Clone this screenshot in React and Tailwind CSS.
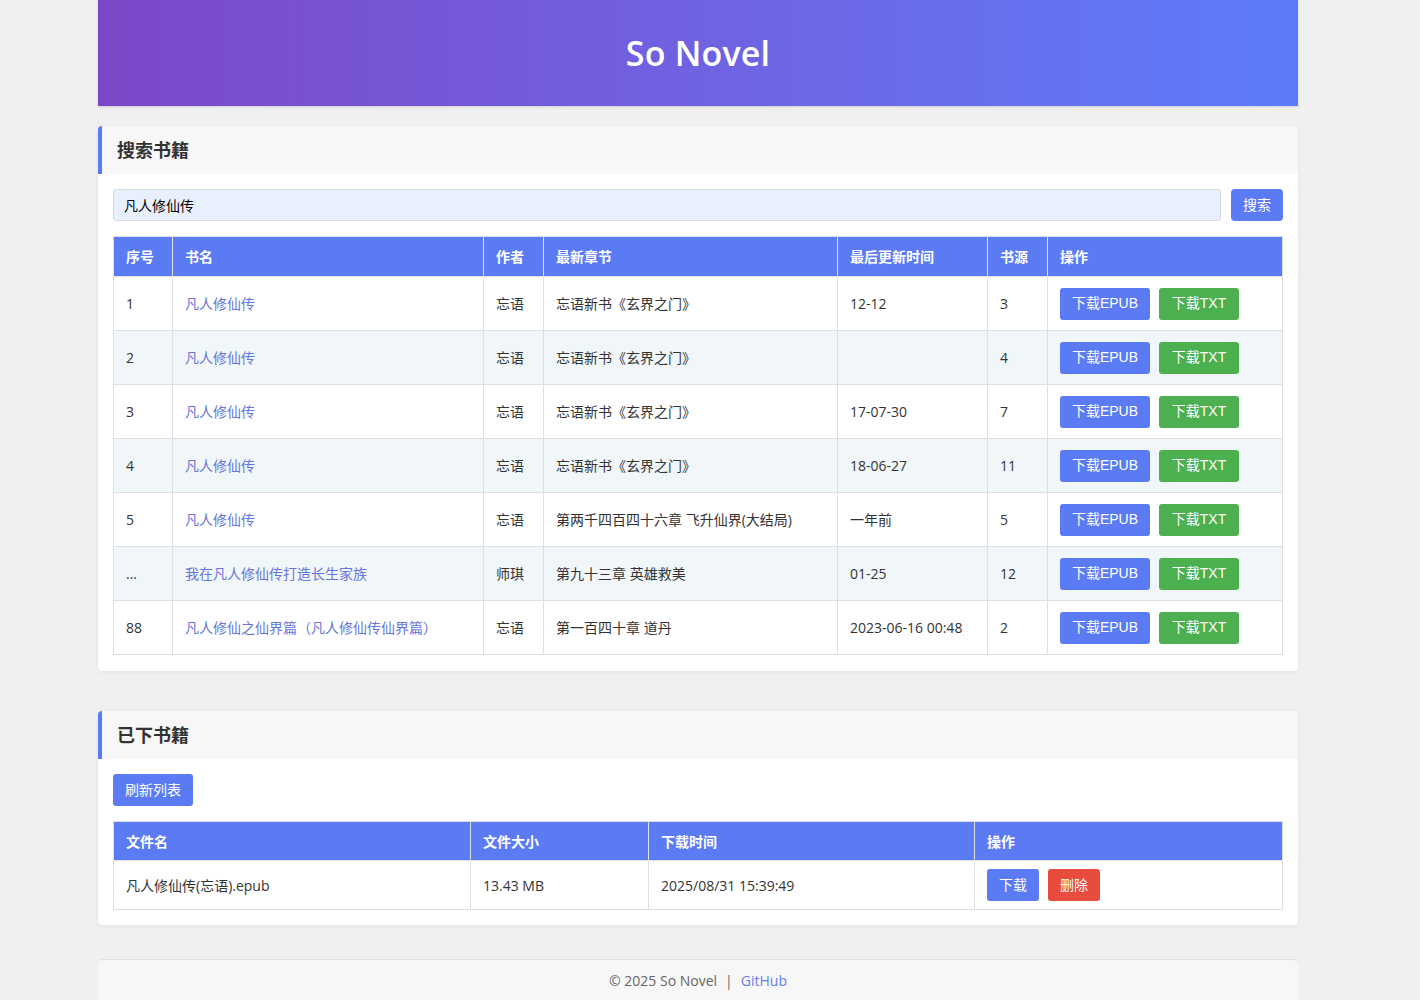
const books = [
  { no: "1", name: "凡人修仙传", author: "忘语", chapter: "忘语新书《玄界之门》", time: "12-12", src: "3" },
  { no: "2", name: "凡人修仙传", author: "忘语", chapter: "忘语新书《玄界之门》", time: "", src: "4" },
  { no: "3", name: "凡人修仙传", author: "忘语", chapter: "忘语新书《玄界之门》", time: "17-07-30", src: "7" },
  { no: "4", name: "凡人修仙传", author: "忘语", chapter: "忘语新书《玄界之门》", time: "18-06-27", src: "11" },
  { no: "5", name: "凡人修仙传", author: "忘语", chapter: "第两千四百四十六章 飞升仙界(大结局)", time: "一年前", src: "5" },
  { no: "...", name: "我在凡人修仙传打造长生家族", author: "师琪", chapter: "第九十三章 英雄救美", time: "01-25", src: "12" },
  { no: "88", name: "凡人修仙之仙界篇（凡人修仙传仙界篇）", author: "忘语", chapter: "第一百四十章 道丹", time: "2023-06-16 00:48", src: "2" },
];

const btnFont = { fontFamily: '"Liberation Sans", "Noto Sans CJK SC", sans-serif' };

const CardHeader = ({ title }) => (
  <div className="h-[48px] bg-[#f7f7f7] border-l-4 border-[#5b7bf5] flex items-center pl-[15px]">
    <h2 className="text-[18px] font-bold text-[#333]">{title}</h2>
  </div>
);

export default function App() {
  return (
    <div
      className="min-h-screen bg-[#f0f0f0] text-[#333] text-[14px]"
      style={{ fontFamily: '"Open Sans", "Noto Sans CJK SC", sans-serif' }}
    >
      <div className="w-[1200px] ml-[98px]">
        {/* 顶部 */}
        <header className="h-[106px] bg-gradient-to-r from-[#7b47c9] to-[#5b7cfa] flex items-center justify-center shadow-sm">
          <h1 className="text-white text-[34px] font-semibold tracking-[0.2px]">So Novel</h1>
        </header>

        {/* 搜索书籍 */}
        <section className="mt-[20px] bg-white rounded-[4px] shadow-[0_1px_4px_rgba(0,0,0,0.06)] overflow-hidden">
          <CardHeader title="搜索书籍" />
          <div className="p-[15px] pb-[16px]">
            <div className="flex gap-[10px]">
              <input
                defaultValue="凡人修仙传"
                className="flex-1 h-[32px] bg-[#e8f0fe] border border-[#d6dbe4] rounded-[3px] px-[10px] text-[14px] text-black outline-none"
              />
              <button style={btnFont} className="w-[52px] h-[32px] bg-[#5b7bf5] text-white rounded-[4px] text-[14px]">
                搜索
              </button>
            </div>
            <table className="mt-[15px] w-full table-fixed border-collapse">
              <colgroup>
                <col className="w-[59px]" />
                <col className="w-[311px]" />
                <col className="w-[60px]" />
                <col className="w-[294px]" />
                <col className="w-[150px]" />
                <col className="w-[60px]" />
                <col />
              </colgroup>
              <thead>
                <tr className="h-[40px] bg-[#5b7bf5] text-white text-left">
                  {["序号", "书名", "作者", "最新章节", "最后更新时间", "书源", "操作"].map((h) => (
                    <th key={h} className="border border-[#dcdfe6] px-[12px] font-bold">{h}</th>
                  ))}
                </tr>
              </thead>
              <tbody>
                {books.map((b, i) => (
                  <tr key={i} className={`h-[54px] ${i % 2 === 1 ? "bg-[#f1f6f9]" : "bg-white"}`}>
                    <td className="border border-[#dcdfe6] px-[12px]">{b.no}</td>
                    <td className="border border-[#dcdfe6] px-[12px] text-[#6675dd]">{b.name}</td>
                    <td className="border border-[#dcdfe6] px-[12px]">{b.author}</td>
                    <td className="border border-[#dcdfe6] px-[12px]">{b.chapter}</td>
                    <td className="border border-[#dcdfe6] px-[12px]">{b.time}</td>
                    <td className="border border-[#dcdfe6] px-[12px]">{b.src}</td>
                    <td className="border border-[#dcdfe6] px-[12px]">
                      <div className="flex gap-[9px]">
                        <button style={btnFont} className="w-[90px] h-[32px] bg-[#5b7bf5] text-white rounded-[3px] text-[14px]">下载EPUB</button>
                        <button style={btnFont} className="w-[80px] h-[32px] bg-[#4caf50] text-white rounded-[3px] text-[14px]">下载TXT</button>
                      </div>
                    </td>
                  </tr>
                ))}
              </tbody>
            </table>
          </div>
        </section>

        {/* 已下书籍 */}
        <section className="mt-[40px] bg-white rounded-[4px] shadow-[0_1px_4px_rgba(0,0,0,0.06)] overflow-hidden">
          <CardHeader title="已下书籍" />
          <div className="p-[15px]">
            <button style={btnFont} className="block w-[80px] h-[32px] bg-[#5b7bf5] text-white rounded-[3px] text-[14px]">刷新列表</button>
            <table className="mt-[15px] w-full table-fixed border-collapse">
              <colgroup>
                <col className="w-[357px]" />
                <col className="w-[178px]" />
                <col className="w-[326px]" />
                <col />
              </colgroup>
              <thead>
                <tr className="h-[39px] bg-[#5b7bf5] text-white text-left">
                  {["文件名", "文件大小", "下载时间", "操作"].map((h) => (
                    <th key={h} className="border border-[#dcdfe6] px-[12px] font-bold">{h}</th>
                  ))}
                </tr>
              </thead>
              <tbody>
                <tr className="h-[49px]">
                  <td className="border border-[#dcdfe6] px-[12px]">凡人修仙传(忘语).epub</td>
                  <td className="border border-[#dcdfe6] px-[12px]">13.43 MB</td>
                  <td className="border border-[#dcdfe6] px-[12px]">2025/08/31 15:39:49</td>
                  <td className="border border-[#dcdfe6] px-[12px]">
                    <div className="flex gap-[9px]">
                      <button style={btnFont} className="w-[52px] h-[32px] bg-[#5b7bf5] text-white rounded-[3px] text-[14px]">下载</button>
                      <button style={btnFont} className="w-[52px] h-[32px] bg-[#e74c3c] text-white rounded-[3px] text-[14px]">删除</button>
                    </div>
                  </td>
                </tr>
              </tbody>
            </table>
          </div>
        </section>

        {/* 页脚 */}
        <footer className="mt-[34px] h-[42px] bg-[#f7f7f7] border-t border-[#e0e0e0] rounded-t-[4px] flex items-center justify-center text-[#666] text-[14px]">
          <span>© 2025 So Novel</span>
          <span className="mx-[8px]">|</span>
          <a className="text-[#667eea]">GitHub</a>
        </footer>
      </div>
    </div>
  );
}
